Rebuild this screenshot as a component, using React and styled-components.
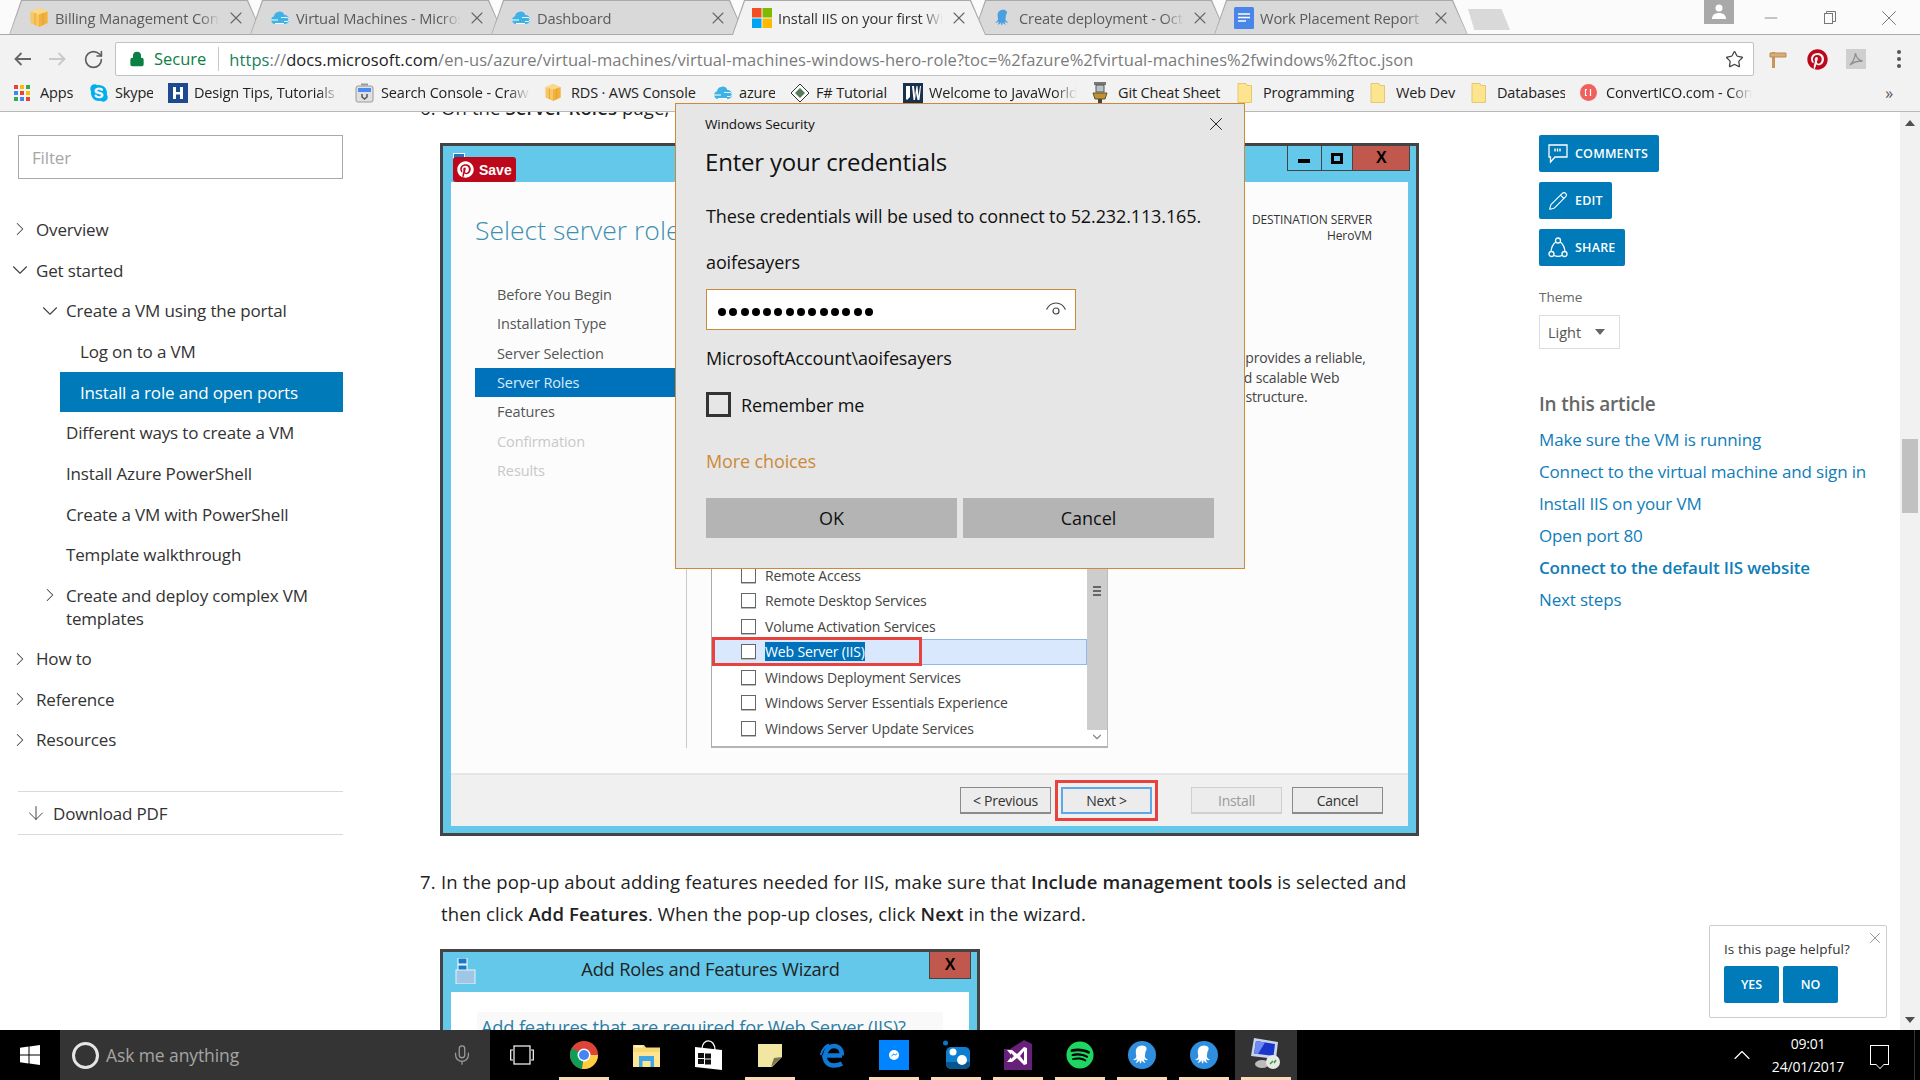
import React from "react";
import styled, { createGlobalStyle } from "styled-components";
import {
  ArrowDown, ChevronDown, ChevronRight, ChevronUp,
  Lock, Mic, Minus, Pencil, RotateCw, Star, X,
} from "lucide-react";
import { FaPinterest, FaSkype, FaSpotify } from "react-icons/fa";

const GlobalStyle = createGlobalStyle`
  html, body { margin: 0; padding: 0; overflow: hidden; background: #fff; }
  body { font-family: "Open Sans", "Liberation Sans", sans-serif; color: #222; }
  * { box-sizing: border-box; }
`;

const Page = styled.div`
  position: relative;
  width: 1920px;
  height: 1080px;
  display: flex;
  flex-direction: column;
  overflow: hidden;
`;

/* ---------- small drawn icons ---------- */

const AwsIcon = ({ size = 18 }) => (
  <svg width={size} height={size + 1} viewBox="0 0 18 19">
    <path d="M9 0l8.500 3.500v11.500L9 19 .5 15V3.500z" fill="#f7c765" />
    <path d="M.5 3.500L9 0l8.500 3.500L9 6.500z" fill="#fbd88c" />
    <path d="M9 6.500V19l8.500-4V3.500z" fill="#f2b13c" />
    <path d="M5 5v12M13 5v12" stroke="#e09f30" strokeWidth=".8" />
  </svg>
);
const CloudIcon = ({ size = 20 }) => (
  <svg width={size} height={size} viewBox="0 0 20 20">
    <path d="M5 16a4 4 0 0 1-1-7.800A5.500 5.500 0 0 1 14.500 7 4.500 4.500 0 0 1 15 16z" fill="#3fb2e5" />
    <path d="M1 12h7M5 15.500h9" stroke="#fff" strokeWidth="1.200" />
    <path d="M11 9.500h6a2 2 0 0 1 0 4h-3" stroke="#e4f5fc" strokeWidth="1" fill="none" />
  </svg>
);
const MsIcon = () => (
  <svg width="20" height="20" viewBox="0 0 20 20">
    <rect width="9.500" height="9.500" fill="#f25022" />
    <rect x="10.500" width="9.500" height="9.500" fill="#7fba00" />
    <rect y="10.500" width="9.500" height="9.500" fill="#00a4ef" />
    <rect x="10.500" y="10.500" width="9.500" height="9.500" fill="#ffb900" />
  </svg>
);
const octopusPath = "M12 2c-4 0-6.500 3-6.500 6.500 0 2.600.8 4 .4 5.500-.4 1.600-2 2.500-3.400 3 1.500.7 3.400.3 4.500-.9-.1 1.700-.8 3-1.800 4 1.900.1 3.400-1.200 4.100-3 .1 1.400.3 2.600 1.200 3.900.9-1.300 1.100-2.500 1.200-3.900.7 1.800 2.200 3.100 4.100 3-1-1-1.700-2.300-1.800-4 1.100 1.200 3 1.600 4.500.9-1.400-.5-3-1.400-3.400-3-.4-1.500.4-2.900.4-5.500C18.500 5 16 2 12 2z";
const OctopusIcon = ({ size = 22, color = "#4a9fe0" }) => (
  <svg width={size} height={size} viewBox="0 0 24 24"><path d={octopusPath} fill={color} /></svg>
);
const DocsIcon = () => (
  <svg width="20" height="22" viewBox="0 0 20 22">
    <rect width="20" height="22" rx="1.500" fill="#4a86e8" />
    <path d="M4 7h12M4 10.500h12M4 14h8" stroke="#fff" strokeWidth="1.600" />
  </svg>
);
const AppsIcon = () => {
  const colors = ["#e94335", "#fbbc05", "#34a853", "#4285f4", "#ea4335", "#fbbc05", "#34a853", "#4285f4", "#ea4335"];
  return (
    <svg width="16" height="16" viewBox="0 0 16 16">
      {colors.map((c, i) => (
        <rect key={i} x={(i % 3) * 6} y={Math.floor(i / 3) * 6} width="4" height="4" fill={c} />
      ))}
    </svg>
  );
};
const LetterH = () => (
  <svg width="20" height="20" viewBox="0 0 20 20">
    <rect width="20" height="20" fill="#1d4a91" />
    <path d="M5 4h3v5h4V4h3v12h-3v-4.500H8V16H5z" fill="#fff" />
  </svg>
);
const ConsoleIcon = () => (
  <svg width="19" height="20" viewBox="0 0 19 20">
    <rect x="1" y="3" width="17" height="16" rx="2" fill="#e0e0e0" stroke="#9a9a9a" />
    <rect x="3" y="5" width="13" height="4" fill="#4c8bf5" />
    <path d="M6 1.500h7" stroke="#9a9a9a" strokeWidth="2" />
    <path d="M7 11v3l2.500 2 2.500-2v-3" fill="none" stroke="#555" strokeWidth="1.500" />
  </svg>
);
const DiamondIcon = () => (
  <svg width="20" height="20" viewBox="0 0 20 20">
    <path d="M10 1l9 9-9 9-9-9z" fill="#fff" stroke="#333" />
    <path d="M10 5l5 5-5 5-5-5z" fill="#567a5a" />
  </svg>
);
const JavaWorldIcon = () => (
  <svg width="20" height="20" viewBox="0 0 20 20">
    <rect width="20" height="20" fill="#17314f" />
    <path d="M3 3h4v11l-3 3-1-1zM9 3h2l1 10 1.500-10h1l1 10L17 3h1l-1.500 14h-2L13 10l-1 7h-1.500z" fill="#fff" />
  </svg>
);
const GitIcon = () => (
  <svg width="16" height="22" viewBox="0 0 16 22">
    <rect x="2" y="0" width="12" height="3" fill="#777" />
    <rect x="4" y="3" width="8" height="7" fill="#b9c2c6" stroke="#555" />
    <path d="M1 11h14l-2 6H3z" fill="#c6902c" stroke="#553" />
    <rect x="6" y="17" width="4" height="5" fill="#444" />
  </svg>
);
const FolderMark = () => (
  <svg width="15" height="20" viewBox="0 0 15 20">
    <path d="M1 .5h8l1 2h4.500v17H1z" fill="#fde48e" stroke="#e4c86f" />
  </svg>
);
const ConvertIcon = () => (
  <svg width="17" height="17" viewBox="0 0 17 17">
    <circle cx="8.500" cy="8.500" r="8.500" fill="#f0605d" />
    <path d="M7 5.500H5.500v6H7M10.500 5v7" fill="none" stroke="#fff" strokeWidth="1.200" />
  </svg>
);
const PostIcon = () => (
  <svg width="18" height="18" viewBox="0 0 18 18">
    <path d="M3 2h3v16H3z" fill="#c9955a" />
    <path d="M1 3h16v4H1z" fill="#d8ae78" stroke="#b98a50" />
  </svg>
);
const PdfIcon = () => (
  <svg width="20" height="20" viewBox="0 0 20 20">
    <rect width="20" height="20" fill="#cfcfcf" />
    <path d="M4 16c3-3 5-8 5.500-12 .5 4 3 7 7 8-4 0-9 .5-12.500 4z" fill="none" stroke="#8f8f8f" strokeWidth="1.300" />
  </svg>
);
const RestoreIcon = () => (
  <svg width="12" height="13" viewBox="0 0 12 13" fill="none" stroke="#777" strokeWidth="1">
    <rect x="0.500" y="2.500" width="8" height="10" />
    <path d="M2.500 2.500V.5h9v10h-3" />
  </svg>
);
const BackIcon = ({ color }) => (
  <svg width="18" height="14" viewBox="0 0 18 14" fill="none" stroke={color} strokeWidth="1.800">
    <path d="M7.500 1L1.500 7l6 6M1.500 7H17" />
  </svg>
);
const ForwardIcon = ({ color }) => (
  <svg width="18" height="14" viewBox="0 0 18 14" fill="none" stroke={color} strokeWidth="1.800">
    <path d="M10.500 1l6 6-6 6M16.500 7H1" />
  </svg>
);
const EyeIcon = () => (
  <svg width="22" height="16" viewBox="0 0 22 16" fill="none" stroke="#444" strokeWidth="1.200">
    <path d="M1.500 7.500C4 2.500 8 1 11 1s7 1.500 9.500 6.500" />
    <circle cx="11" cy="9" r="3" />
  </svg>
);
const CommentIcon = () => (
  <svg width="20" height="20" viewBox="0 0 20 20" fill="none" stroke="#fff" strokeWidth="1.300">
    <path d="M1 1h18v12H7l-4.500 5v-5H1z" />
    <path d="M7 4.500v3M9.500 4.500v3M12 4.500v3" strokeWidth="1.400" />
  </svg>
);
const ShareIcon = () => (
  <svg width="20" height="22" viewBox="0 0 20 22" fill="none" stroke="#fff" strokeWidth="1.300">
    <circle cx="10" cy="3.500" r="2.500" />
    <circle cx="3.500" cy="17" r="2.500" />
    <circle cx="16.500" cy="17" r="2.500" />
    <path d="M7.800 5C5 7 3.500 10 3 14.500M12.200 5C15 7 16.500 10 17 14.500M6 18.500c2.500 1 5.500 1 8 0" />
  </svg>
);
const WinLogo = () => (
  <svg width="20" height="20" viewBox="0 0 20 20" fill="#fff">
    <path d="M0 2.800L8.500 1.600V9.500H0zM9.500 1.500L20 0v9.500H9.500zM0 10.500h8.500v7.900L0 17.200zM9.500 10.500H20V20L9.500 18.500z" />
  </svg>
);
const TaskViewIcon = () => (
  <svg width="24" height="20" viewBox="0 0 24 20" fill="none" stroke="#fff" strokeWidth="1.200">
    <rect x="4" y="1" width="16" height="18" />
    <path d="M3 5H.7v10H3M21 5h2.300v10H21" />
  </svg>
);
const ChromeIcon = () => (
  <svg width="28" height="28" viewBox="0 0 28 28">
    <circle cx="14" cy="14" r="14" fill="#db4437" />
    <path d="M14 14L2 7a14 14 0 0 0 10 20.900z" fill="#0f9d58" />
    <path d="M14 14h14a14 14 0 0 1-16 13.900z" fill="#ffcd40" />
    <circle cx="14" cy="14" r="6.500" fill="#fff" />
    <circle cx="14" cy="14" r="5" fill="#4285f4" />
  </svg>
);
const FolderIcon = () => (
  <svg width="27" height="23" viewBox="0 0 27 23">
    <path d="M0 1h11l2 2.500h14V23H0z" fill="#f8d775" />
    <path d="M0 8h27v15H0z" fill="#fde592" />
    <path d="M1.500 1.500h8v2h-8z" fill="#fff7d5" />
    <path d="M6 12h15v11h-3.500v-6h-8v6H6z" fill="#3fa7e6" />
  </svg>
);
const StoreIcon = () => (
  <svg width="27" height="30" viewBox="0 0 27 30">
    <path d="M7 9c0-11 13-11 13 1" fill="none" stroke="#fff" strokeWidth="1.300" />
    <path d="M0 7l27 3v20L0 27z" fill="#fff" />
    <path d="M3 13h6v5H3zM10 13.500h6v5h-6zM3 19h6v5H3zM10 19.500h6v5h-6z" fill="#111" />
  </svg>
);
const StickyIcon = () => (
  <svg width="24" height="23" viewBox="0 0 24 23">
    <path d="M0 0h24v13L14 23H0z" fill="#f1e7a2" />
    <path d="M13 23l3-9 8-1z" fill="#7d7550" />
  </svg>
);
const EdgeIcon = () => (
  <svg width="24" height="25" viewBox="0 0 24 25" fill="none" stroke="#0f78d4" strokeWidth="4.500">
    <path d="M22 12.500H5C6 7 9 3 14 3s8 4 8 9.500" />
    <path d="M4.500 12c0 7 4 10.500 9.500 10.500 3 0 6-.8 8-2" />
    <path d="M.8 12C2 7 5 3 9 1.500" strokeWidth="2" />
  </svg>
);
const MessengerTile = () => (
  <svg width="30" height="30" viewBox="0 0 30 30">
    <rect width="30" height="30" fill="#0084ff" />
    <circle cx="15" cy="15" r="5" fill="#fff" />
    <path d="M12.500 16l2.500-2.200 1.300 1.300 2-1.600" stroke="#0084ff" fill="none" />
  </svg>
);
const PhotoTile = () => (
  <svg width="28" height="30" viewBox="0 0 28 30">
    <circle cx="3.500" cy="3" r="2.500" fill="#0a78c6" />
    <rect x="4" y="7" width="24" height="22" rx="5" fill="#0c7fd0" />
    <path d="M4 22h24v2a5 5 0 0 1-5 5H9a5 5 0 0 1-5-5z" fill="#07568f" />
    <circle cx="11" cy="12" r="3.500" fill="#fff" />
    <circle cx="20" cy="20" r="5" fill="#fff" />
  </svg>
);
const VsIcon = () => (
  <svg width="28" height="30" viewBox="0 0 28 30">
    <path d="M0 9h6l14-9 8 4v26H0z" fill="#68217a" />
    <path d="M3 10l5 0 5 4 7-7 3 1v16l-3 1-7-7-5 4-5 0 5-6z" fill="#fff" />
    <path d="M7 13l3 3-3 3zM20 11v10l-4-5z" fill="#68217a" />
  </svg>
);
const OctoBadge = () => (
  <svg width="28" height="28" viewBox="0 0 28 28">
    <circle cx="14" cy="14" r="14" fill="#2f8fde" />
    <g transform="translate(2.500 2.500) scale(.96)"><path d={octopusPath} fill="#fff" /></g>
  </svg>
);
const RdpIcon = () => (
  <svg width="32" height="34" viewBox="0 0 32 34">
    <path d="M4 0l24 4-2 17L1 18z" fill="#c9d3ea" />
    <path d="M6 3l19 3-1.500 12L4 15.500z" fill="#1a35c9" />
    <path d="M6 3l9 1.500L8 16l-4-.5z" fill="#6f8cf0" />
    <ellipse cx="12" cy="26" rx="7" ry="4" fill="#bbb" />
    <circle cx="23" cy="24" r="7" fill="#e8e8e8" />
    <path d="M20 26l3-3M24 25l2-3" stroke="#2fa32f" strokeWidth="1.500" />
  </svg>
);
const FileIcon = () => (
  <svg width="21" height="26" viewBox="0 0 21 26">
    <rect x="3" y="0" width="9" height="6" fill="#1a78c9" stroke="#fff" />
    <rect x="3" y="7" width="9" height="6" fill="#1a78c9" stroke="#fff" />
    <rect x="1" y="12" width="19" height="14" fill="#9fc6e4" stroke="#e6f2fa" />
  </svg>
);

/* ---------- browser chrome ---------- */

const TabStrip = styled.div`
  height: 35px;
  display: flex;
  padding-left: 9px;
  background: #fbfbfb;
  box-shadow: inset 0 -1px #a9a9a9;
`;

const Tab = styled.div`
  position: relative;
  width: 254px;
  height: 35px;
  margin-right: -13px;
  padding: 0 17px 0 20px;
  display: flex;
  align-items: center;
  gap: 6px;
  background: #a9a9a9;
  z-index: ${(p) => (p.$active ? 2 : 1)};
  color: ${(p) => (p.$active ? "#333" : "#5a5a5a")};
  clip-path: polygon(12px 0, calc(100% - 15px) 0, 100% 100%, 0 100%);
  &::before {
    content: "";
    position: absolute;
    inset: 1px 1px ${(p) => (p.$active ? "0" : "1px")} 1px;
    background: ${(p) => (p.$active ? "#f2f2f2" : "#d9d9d9")};
    clip-path: polygon(12px 0, calc(100% - 15px) 0, 100% 100%, 0 100%);
  }
  & > * { position: relative; flex-shrink: 0; }
`;

const TabIcon = styled.span`
  width: 20px;
  height: 22px;
  display: flex;
  align-items: center;
  justify-content: center;
`;

const TabTitle = styled.span`
  flex: 1 1 0 !important;
  min-width: 0;
  font-size: 14.700px;
  letter-spacing: -0.15px;
  white-space: nowrap;
  overflow: hidden;
  mask-image: linear-gradient(to right, #000 88%, transparent);
`;

const NewTab = styled.div`
  width: 42px;
  height: 21px;
  margin: 9px 0 0 13px;
  background: #d9d9d9;
  clip-path: polygon(0 0, 80% 0, 100% 100%, 15% 100%);
`;

const WindowButtons = styled.div`
  margin-left: auto;
  padding-right: 2px;
  display: flex;
  align-items: flex-start;
`;

const Profile = styled.div`
  width: 30px;
  height: 24px;
  margin-right: 7px;
  background: #a9a9a9;
  display: flex;
  align-items: center;
  justify-content: center;
`;

const WindowButton = styled.div`
  width: 59px;
  height: 35px;
  display: flex;
  align-items: center;
  justify-content: center;
  color: #777;
`;

const Toolbar = styled.div`
  height: 41px;
  padding: 7px 0 0 14px;
  display: flex;
  align-items: flex-start;
  background: #f2f2f2;
`;

const NavButton = styled.span`
  width: 18px;
  height: 34px;
  margin-right: ${(p) => p.$gap}px;
  flex-shrink: 0;
  display: flex;
  align-items: center;
  justify-content: center;
  color: #5f5f5f;
  svg { flex-shrink: 0; }
`;

const Address = styled.div`
  width: 1639px;
  height: 34px;
  flex-shrink: 0;
  padding: 0 9px 0 13px;
  display: flex;
  align-items: center;
  background: #fff;
  border: 1px solid #c2c2c2;
  border-radius: 2px;
  font-size: 16.500px;
  white-space: nowrap;
`;

const Secure = styled.span`
  margin-left: 9px;
  padding-right: 12px;
  color: #0b8043;
  border-right: 1px solid #c9c9c9;
  line-height: 24px;
`;

const Url = styled.span`
  flex: 1;
  margin-left: 10px;
  color: #7b7b7b;
  letter-spacing: 0.06px;
  b { font-weight: 400; color: #222; }
  i { font-style: normal; color: #1a7f5a; }
`;

const ExtButton = styled.span`
  width: ${(p) => p.$w}px;
  height: 34px;
  flex-shrink: 0;
  display: flex;
  align-items: center;
  justify-content: center;
  color: #555;
`;

const Bookmarks = styled.div`
  height: 36px;
  padding: 0 27px 2px 14px;
  display: flex;
  align-items: center;
  gap: 15px;
  background: #f2f2f2;
  border-bottom: 1px solid #b8b8b8;
  font-size: 14.500px;
  letter-spacing: -0.15px;
  color: #222;
`;

const Bookmark = styled.div`
  display: flex;
  align-items: center;
`;

const BookmarkIcon = styled.span`
  width: 26px;
  display: flex;
  align-items: center;
`;

const BookmarkLabel = styled.span`
  width: ${(p) => p.$w}px;
  white-space: nowrap;
  overflow: hidden;
  ${(p) => p.$fade && "mask-image: linear-gradient(to right, #000 85%, transparent);"}
`;

const MoreBookmarks = styled.span`
  margin-left: auto;
  font-size: 16px;
  color: #555;
`;

/* ---------- page columns ---------- */

const Main = styled.main`
  flex: 1;
  min-height: 0;
  display: flex;
  overflow: hidden;
  background: #fff;
`;

const Sidebar = styled.nav`
  width: 420px;
  flex-shrink: 0;
  padding-top: 23px;
  font-size: 17px;
  letter-spacing: -0.16px;
  color: #333;
`;

const Filter = styled.div`
  width: 325px;
  height: 44px;
  margin: 0 0 30px 18px;
  padding-left: 13px;
  display: flex;
  align-items: center;
  border: 1px solid #aaa;
  color: #a6a6a6;
`;

const TocRow = styled.div`
  width: ${(p) => 343 - (p.$left || 0)}px;
  margin-left: ${(p) => p.$left || 0}px;
  padding: ${(p) => (p.$multi ? "8.500px" : "8.850px")} 0 ${(p) => (p.$multi ? "8.500px" : "8.850px")} ${(p) => p.$pad}px;
  display: flex;
  line-height: 23px;
  background: ${(p) => (p.$active ? "#007ab8" : "transparent")};
  color: ${(p) => (p.$active ? "#fff" : "inherit")};
`;

const Caret = styled.span`
  width: 24px;
  height: 23px;
  margin-right: 4px;
  flex-shrink: 0;
  display: flex;
  align-items: center;
  justify-content: center;
  color: #444;
  svg { flex-shrink: 0; }
`;

const DownloadRow = styled.div`
  width: 325px;
  height: 44px;
  margin: 31px 0 0 18px;
  padding-left: 7px;
  display: flex;
  align-items: center;
  gap: 6px;
  border-top: 1px solid #d9d9d9;
  border-bottom: 1px solid #d9d9d9;
`;

const Article = styled.article`
  width: 999px;
  flex-shrink: 0;
  margin-top: -20px;
`;

const Step = styled.div`
  display: flex;
  font-size: 18.500px;
  letter-spacing: 0.12px;
  line-height: 32px;
  color: #222;
  margin-top: ${(p) => p.$top || 0}px;
  b { font-weight: 600; }
`;

const StepNumber = styled.span`
  width: 21px;
  flex-shrink: 0;
`;

const StepText = styled.span`
  white-space: nowrap;
`;

/* ---------- server manager screenshots ---------- */

const WizardFrame = styled.div`
  position: relative;
  width: ${(p) => p.$w}px;
  height: ${(p) => p.$h}px;
  margin: ${(p) => p.$top}px 0 0 20px;
  padding: 0 8px 7px;
  display: flex;
  flex-direction: column;
  background: #63c8ea;
  border: 3px solid #444;
`;

const FrameBar = styled.div`
  height: 36px;
  flex-shrink: 0;
  display: flex;
  align-items: flex-start;
  margin-right: -2px;
`;

const TinyIcon = styled.span`
  width: 12px;
  height: 8px;
  margin: 7px 0 0 2px;
  background: #1a78c9;
  border: 1px solid #fff;
`;

const FrameButton = styled.span`
  width: ${(p) => p.$w}px;
  height: 26px;
  margin-top: -1px;
  margin-left: ${(p) => p.$left || 0}px;
  display: flex;
  align-items: center;
  justify-content: center;
  background: ${(p) => (p.$close ? "#c0584e" : "transparent")};
  border: 1px solid #444;
  border-left-width: ${(p) => (p.$first ? 1 : 0)}px;
  font-family: "Liberation Sans", sans-serif;
  font-weight: 700;
  font-size: 16px;
  color: #000;
`;

const MinGlyph = styled.span`
  width: 12px;
  height: 4px;
  margin-top: 6px;
  background: #000;
`;

const MaxGlyph = styled.span`
  width: 12px;
  height: 11px;
  border: 3px solid #000;
`;

const PinSave = styled.div`
  position: absolute;
  left: 10px;
  top: 11px;
  width: 63px;
  height: 25px;
  padding-left: 4px;
  display: flex;
  align-items: center;
  gap: 5px;
  background: #bd081c;
  border-radius: 3px;
  color: #fff;
  font-family: "Liberation Sans", sans-serif;
  font-weight: 700;
  font-size: 14px;
`;

const WizardBody = styled.div`
  flex: 1;
  min-height: 0;
  display: flex;
  flex-direction: column;
  background: #fcfcfc;
`;

const WizardContent = styled.div`
  flex: 1;
  min-height: 0;
  padding: 30px 36px 25px 24px;
  display: flex;
  flex-direction: column;
`;

const WizardHeader = styled.div`
  height: 68px;
  flex-shrink: 0;
  display: flex;
  justify-content: space-between;
`;

const WizardTitle = styled.div`
  font-size: 26.500px;
  font-weight: 300;
  line-height: 36px;
  color: #3b8fb0;
`;

const Destination = styled.div`
  text-align: right;
  font-size: 12px;
  line-height: 16px;
  letter-spacing: -0.1px;
  color: #333;
`;

const WizardColumns = styled.div`
  flex: 1;
  min-height: 0;
  display: flex;
`;

const StepNav = styled.div`
  width: 212px;
  flex-shrink: 0;
  border-right: 1px solid #c9c9c9;
`;

const StepNavItem = styled.div`
  height: 29.300px;
  padding-left: 22px;
  display: flex;
  align-items: center;
  font-size: 14.500px;
  letter-spacing: -0.1px;
  background: ${(p) => (p.$active ? "#0071bb" : "transparent")};
  color: ${(p) => (p.$active ? "#d7ecf8" : p.$off ? "#c8c8c8" : "#555")};
`;

const RoleBox = styled.div`
  width: 397px;
  margin-left: 24px;
  flex-shrink: 0;
  display: flex;
  background: #fff;
  border-left: 1px solid #aaa;
  border-bottom: 2px solid #b5b5b5;
  border-right: 1px solid #bbb;
`;

const RoleList = styled.div`
  flex: 1;
  padding-bottom: 5px;
  display: flex;
  flex-direction: column;
  justify-content: flex-end;
`;

const RoleRow = styled.div`
  position: relative;
  height: 25.500px;
  padding-left: 29px;
  display: flex;
  align-items: center;
  gap: 9px;
  font-size: 14px;
  letter-spacing: -0.15px;
  color: #444;
  ${(p) => p.$selected && "background: #d9e8fc; box-shadow: inset 0 0 0 1px #8fb9ec;"}
`;

const RoleCheck = styled.span`
  width: 15px;
  height: 15px;
  flex-shrink: 0;
  background: #fff;
  border: 1px solid #666;
  box-shadow: 0 1px 0 #bbb;
`;

const RoleName = styled.span`
  ${(p) => p.$selected && "background: #0071bb; color: #fff; line-height: 19px;"}
`;

const RedBox = styled.span`
  position: absolute;
  left: ${(p) => p.$l}px;
  top: ${(p) => p.$t}px;
  width: ${(p) => p.$w}px;
  height: ${(p) => p.$h}px;
  border: 3px solid #e8423f;
`;

const RoleScroll = styled.div`
  width: 20px;
  flex-shrink: 0;
  display: flex;
  flex-direction: column;
  justify-content: flex-end;
  align-items: center;
  background: #cdcdcd;
`;

const ScrollGrip = styled.span`
  width: 8px;
  height: 10px;
  margin-bottom: 134px;
  background: repeating-linear-gradient(#666 0 2px, transparent 2px 4px);
`;

const RoleScrollDown = styled.span`
  width: 20px;
  height: 16px;
  display: flex;
  justify-content: center;
  background: #fff;
  color: #888;
`;

const Description = styled.div`
  margin: 68px 0 0 34px;
  font-size: 14px;
  line-height: 19.500px;
  letter-spacing: -0.15px;
  white-space: nowrap;
  color: #444;
`;

const WizardFooter = styled.div`
  height: 53px;
  flex-shrink: 0;
  padding-right: 25px;
  display: flex;
  justify-content: flex-end;
  align-items: center;
  gap: 10px;
  background: #f0f0f0;
  border-top: 2px solid #e6e6e6;
`;

const WizardButton = styled.span`
  position: relative;
  width: 91px;
  height: 27px;
  margin-left: ${(p) => p.$left || 0}px;
  display: flex;
  align-items: center;
  justify-content: center;
  background: #ececec;
  font-size: 14px;
  letter-spacing: -0.3px;
  border: 1px solid ${(p) => (p.$off ? "#cfcfcf" : "#8a8a8a")};
  border-bottom-width: 2px;
  color: ${(p) => (p.$off ? "#9a9a9a" : "#333")};
  ${(p) => p.$focus && "border: 2px solid #5fa8e8;"}
`;

const SmallBar = styled.div`
  height: 40px;
  flex-shrink: 0;
  padding-left: 4px;
  display: flex;
  align-items: flex-start;
`;

const SmallIcon = styled.span`
  margin-top: 6px;
`;

const SmallTitle = styled.div`
  flex: 1;
  padding: 4px 0 0 16px;
  text-align: center;
  font-size: 18.300px;
  letter-spacing: -0.2px;
  line-height: 26px;
  color: #222;
`;

const SmallClose = styled.span`
  width: 42px;
  height: 27px;
  margin-right: -2px;
  display: flex;
  align-items: center;
  justify-content: center;
  background: #c0584e;
  border: 1px solid #444;
  border-top: none;
  font-family: "Liberation Sans", sans-serif;
  font-weight: 700;
  font-size: 16px;
  color: #000;
`;

const SmallBody = styled.div`
  flex: 1;
  padding: 20px 26px 0;
  background: #fff;
`;

const FeatureHeading = styled.div`
  padding-left: 4px;
  font-size: 18.300px;
  line-height: 30px;
  letter-spacing: -0.2px;
  white-space: nowrap;
  background: #f9f9f9;
  color: #2d7fa5;
`;

/* ---------- right rail ---------- */

const Rail = styled.aside`
  flex: 1;
  padding: 23px 0 0 120px;
  display: flex;
  flex-direction: column;
  align-items: flex-start;
`;

const ActionButton = styled.div`
  height: 37px;
  width: ${(p) => p.$w}px;
  margin-bottom: 10px;
  padding-left: 9px;
  display: flex;
  align-items: center;
  gap: 7px;
  background: #007ab8;
  border-radius: 2px;
  color: #fff;
  font-size: 12.500px;
  font-weight: 600;
  letter-spacing: 0.2px;
  text-transform: uppercase;
`;

const ThemeLabel = styled.div`
  margin-top: 12px;
  font-size: 13.500px;
  line-height: 18px;
  color: #666;
`;

const ThemeSelect = styled.div`
  width: 81px;
  height: 34px;
  margin-top: 9px;
  padding-left: 8px;
  display: flex;
  align-items: center;
  gap: 14px;
  border: 1px solid #ddd;
  font-size: 14.500px;
  color: #555;
`;

const SelectArrow = styled.span`
  width: 0;
  height: 0;
  border: 5px solid transparent;
  border-top: 6px solid #666;
  border-bottom: none;
`;

const RailHeading = styled.div`
  margin-top: 41px;
  font-size: 19px;
  font-weight: 600;
  line-height: 28px;
  letter-spacing: -0.2px;
  color: #666;
`;

const RailLinks = styled.div`
  margin-top: 6px;
`;

const RailLink = styled.div`
  font-size: 17px;
  line-height: 32px;
  letter-spacing: -0.16px;
  white-space: nowrap;
  color: #0f7db8;
  font-weight: ${(p) => (p.$active ? 600 : 400)};
`;

const PageScroll = styled.div`
  width: 20px;
  flex-shrink: 0;
  padding: 8px 0 7px;
  display: flex;
  flex-direction: column;
  align-items: center;
  background: #f1f1f1;
`;

const ScrollArrow = styled.span`
  width: 0;
  height: 0;
  border: 5px solid transparent;
  ${(p) => (p.$down
    ? "margin-top: auto; border-top: 6px solid #505050; border-bottom: none;"
    : "border-bottom: 6px solid #505050; border-top: none;")}
`;

const ScrollThumb = styled.span`
  width: 16px;
  height: 74px;
  margin-top: 313px;
  background: #c1c1c1;
`;

const HelpCard = styled.div`
  position: absolute;
  left: 1709px;
  top: 925px;
  width: 178px;
  height: 93px;
  padding: 13px 14px;
  background: #fff;
  border: 1px solid #ccc;
  border-radius: 2px;
`;

const HelpClose = styled.span`
  position: absolute;
  right: 2px;
  top: 3px;
  color: #777;
`;

const HelpText = styled.div`
  font-size: 13.500px;
  line-height: 20px;
  letter-spacing: 0.1px;
  white-space: nowrap;
  color: #333;
`;

const HelpButtons = styled.div`
  margin-top: 7px;
  display: flex;
  gap: 4px;
`;

const HelpButton = styled.span`
  width: 55px;
  height: 37px;
  display: flex;
  align-items: center;
  justify-content: center;
  background: #007ab8;
  border-radius: 2px;
  color: #fff;
  font-size: 12.500px;
  font-weight: 600;
`;

/* ---------- credentials dialog ---------- */

const Dialog = styled.div`
  position: absolute;
  left: 675px;
  top: 103px;
  width: 570px;
  height: 466px;
  padding: 10px 29px 0;
  background: #e6e6e6;
  border: 1px solid #cb8a3a;
  color: #111;
`;

const DialogTop = styled.div`
  height: 20px;
  margin-right: -12px;
  display: flex;
  justify-content: space-between;
  align-items: center;
  font-size: 13.500px;
  letter-spacing: -0.1px;
`;

const DialogTitle = styled.div`
  margin-top: 10px;
  font-size: 24px;
  line-height: 36px;
  letter-spacing: -0.2px;
`;

const DialogLine = styled.div`
  margin-top: ${(p) => p.$top}px;
  margin-left: 1px;
  font-size: 18px;
  line-height: 26px;
  letter-spacing: -0.12px;
  white-space: nowrap;
  color: ${(p) => p.$color || "inherit"};
`;

const Password = styled.div`
  width: 370px;
  height: 41px;
  margin: 14px 0 0 1px;
  padding: 0 8px 0 11px;
  display: flex;
  align-items: center;
  justify-content: space-between;
  background: #fff;
  border: 1px solid #cb8a3a;
`;

const Dots = styled.span`
  display: flex;
  gap: 3.300px;
  margin-top: 5px;
`;

const Dot = styled.span`
  width: 8px;
  height: 8px;
  border-radius: 50%;
  background: #000;
`;

const Remember = styled.div`
  margin: 21px 0 0 1px;
  height: 25px;
  display: flex;
  align-items: center;
  gap: 10px;
  font-size: 18px;
  letter-spacing: -0.12px;
`;

const Checkbox = styled.span`
  width: 25px;
  height: 25px;
  border: 3px solid #333;
`;

const DialogButtons = styled.div`
  margin: 24px 0 0 1px;
  display: flex;
  gap: 6px;
`;

const DialogButton = styled.div`
  width: 251px;
  height: 40px;
  display: flex;
  align-items: center;
  justify-content: center;
  background: #b4b4b4;
  font-size: 18px;
`;

/* ---------- taskbar ---------- */

const Taskbar = styled.footer`
  height: 50px;
  flex-shrink: 0;
  display: flex;
  align-items: stretch;
  background: #000;
  color: #fff;
`;

const StartSlot = styled.div`
  width: 60px;
  display: flex;
  align-items: center;
  justify-content: center;
`;

const SearchBox = styled.div`
  width: 430px;
  padding: 0 17px 0 12px;
  display: flex;
  align-items: center;
  background: #343434;
  color: #a5a5a5;
  font-size: 17.500px;
  letter-spacing: -0.1px;
`;

const CortanaRing = styled.span`
  width: 27px;
  height: 27px;
  margin-right: 7px;
  border: 3px solid #e4e4e4;
  border-radius: 50%;
`;

const SearchMic = styled.span`
  margin-left: auto;
  display: flex;
  color: #9a9a9a;
`;

const TaskSlot = styled.div`
  position: relative;
  width: ${(p) => p.$w || 62}px;
  display: flex;
  align-items: center;
  justify-content: center;
  background: ${(p) => (p.$current ? "#333" : "transparent")};
  ${(p) => p.$open && `
    &::after {
      content: "";
      position: absolute;
      left: 6px;
      right: 6px;
      bottom: 0;
      height: 3px;
      background: #fcd9b6;
    }
  `}
`;

const Tray = styled.div`
  margin-left: auto;
  margin-right: 5px;
  padding-right: 25px;
  display: flex;
  align-items: center;
  border-right: 1px solid #333;
`;

const TrayChevron = styled.span`
  display: flex;
  margin-right: 13px;
`;

const Clock = styled.div`
  width: 78px;
  text-align: center;
  font-size: 14px;
  line-height: 23px;
  letter-spacing: -0.2px;
`;

const NotifyIcon = styled.span`
  position: relative;
  width: 19px;
  height: 20px;
  margin-left: 23px;
  border: 1px solid #fff;
  &::after {
    content: "";
    position: absolute;
    left: 5px;
    bottom: -5px;
    width: 7px;
    height: 7px;
    background: #000;
    border-right: 1px solid #fff;
    border-bottom: 1px solid #fff;
    transform: rotate(45deg) scale(.7);
  }
`;

/* ---------- data ---------- */

const tabs = [
  { icon: <AwsIcon />, title: "Billing Management Console" },
  { icon: <CloudIcon />, title: "Virtual Machines - Microsoft Azure" },
  { icon: <CloudIcon />, title: "Dashboard" },
  { icon: <MsIcon />, title: "Install IIS on your first Windows VM", active: true },
  { icon: <OctopusIcon />, title: "Create deployment - Octopus Deploy" },
  { icon: <DocsIcon />, title: "Work Placement Report - Google Docs" },
];

const bookmarks = [
  { icon: <AppsIcon />, label: "Apps", w: 34 },
  { icon: <FaSkype size={20} color="#00aff0" />, label: "Skype", w: 38 },
  { icon: <LetterH />, label: "Design Tips, Tutorials and more", w: 146, fade: true },
  { icon: <ConsoleIcon />, label: "Search Console - Crawl Errors", w: 149, fade: true },
  { icon: <AwsIcon size={16} />, label: "RDS · AWS Console", w: 127 },
  { icon: <CloudIcon />, label: "azure", w: 36 },
  { icon: <DiamondIcon />, label: "F# Tutorial", w: 72 },
  { icon: <JavaWorldIcon />, label: "Welcome to JavaWorld", w: 148, fade: true },
  { icon: <GitIcon />, label: "Git Cheat Sheet", w: 104 },
  { icon: <FolderMark />, label: "Programming", w: 92 },
  { icon: <FolderMark />, label: "Web Dev", w: 60 },
  { icon: <FolderMark />, label: "Databases", w: 68 },
  { icon: <ConvertIcon />, label: "ConvertICO.com - Convert", w: 146, fade: true },
];

const toc = [
  { label: "Overview", pad: 8, caret: "right" },
  { label: "Get started", pad: 8, caret: "down" },
  { label: "Create a VM using the portal", pad: 38, caret: "down" },
  { label: "Log on to a VM", left: 60, pad: 20 },
  { label: "Install a role and open ports", left: 60, pad: 20, active: true },
  { label: "Different ways to create a VM", pad: 66 },
  { label: "Install Azure PowerShell", pad: 66 },
  { label: "Create a VM with PowerShell", pad: 66 },
  { label: "Template walkthrough", pad: 66 },
  { label: "Create and deploy complex VM templates", pad: 38, caret: "right", multi: true },
  { label: "How to", pad: 8, caret: "right" },
  { label: "Reference", pad: 8, caret: "right" },
  { label: "Resources", pad: 8, caret: "right" },
];

const wizardSteps = [
  { label: "Before You Begin" },
  { label: "Installation Type" },
  { label: "Server Selection" },
  { label: "Server Roles", active: true },
  { label: "Features" },
  { label: "Confirmation", off: true },
  { label: "Results", off: true },
];

const roles = [
  "Remote Access",
  "Remote Desktop Services",
  "Volume Activation Services",
  "Web Server (IIS)",
  "Windows Deployment Services",
  "Windows Server Essentials Experience",
  "Windows Server Update Services",
];

const articleLinks = [
  { label: "Make sure the VM is running" },
  { label: "Connect to the virtual machine and sign in" },
  { label: "Install IIS on your VM" },
  { label: "Open port 80" },
  { label: "Connect to the default IIS website", active: true },
  { label: "Next steps" },
];

const taskApps = [
  { icon: <ChromeIcon />, open: true },
  { icon: <FolderIcon /> },
  { icon: <StoreIcon /> },
  { icon: <StickyIcon />, open: true },
  { icon: <EdgeIcon /> },
  { icon: <MessengerTile />, open: true },
  { icon: <PhotoTile />, open: true },
  { icon: <VsIcon />, open: true },
  { icon: <FaSpotify size={28} color="#1ed760" />, open: true },
  { icon: <OctoBadge />, open: true },
  { icon: <OctoBadge />, open: true },
  { icon: <RdpIcon />, open: true, current: true },
];

const App = () => (
  <Page>
    <GlobalStyle />

    <TabStrip>
      {tabs.map((t) => (
        <Tab key={t.title} $active={t.active}>
          <TabIcon>{t.icon}</TabIcon>
          <TabTitle>{t.title}</TabTitle>
          <X size={20} strokeWidth={1.3} color="#666" />
        </Tab>
      ))}
      <NewTab />
      <WindowButtons>
        <Profile>
          <svg width="14" height="16" viewBox="0 0 14 16" fill="#fff">
            <circle cx="7" cy="4" r="3.500" />
            <path d="M0 15c0-4 3-6 7-6s7 2 7 6z" />
          </svg>
        </Profile>
        <WindowButton><Minus size={20} strokeWidth={1} /></WindowButton>
        <WindowButton><RestoreIcon /></WindowButton>
        <WindowButton><X size={26} strokeWidth={0.9} /></WindowButton>
      </WindowButtons>
    </TabStrip>

    <Toolbar>
      <NavButton $gap={16}><BackIcon color="#666" /></NavButton>
      <NavButton $gap={18}><ForwardIcon color="#c8c8c8" /></NavButton>
      <NavButton $gap={13}><RotateCw size={21} strokeWidth={1.9} /></NavButton>
      <Address>
        <Lock size={16} color="#0b8043" fill="#0b8043" />
        <Secure>Secure</Secure>
        <Url>
          <i>https</i>://<b>docs.microsoft.com</b>/en-us/azure/virtual-machines/virtual-machines-windows-hero-role?toc=%2fazure%2fvirtual-machines%2fwindows%2ftoc.json
        </Url>
        <Star size={19} color="#444" strokeWidth={1.6} />
      </Address>
      <ExtButton $w={48}><PostIcon /></ExtButton>
      <ExtButton $w={30}><FaPinterest size={21} color="#bd081c" /></ExtButton>
      <ExtButton $w={48}><PdfIcon /></ExtButton>
      <ExtButton $w={38}>
        <svg width="4" height="18" viewBox="0 0 4 18" fill="#555">
          <circle cx="2" cy="2" r="2" /><circle cx="2" cy="9" r="2" /><circle cx="2" cy="16" r="2" />
        </svg>
      </ExtButton>
    </Toolbar>

    <Bookmarks>
      {bookmarks.map((b) => (
        <Bookmark key={b.label}>
          <BookmarkIcon>{b.icon}</BookmarkIcon>
          <BookmarkLabel $w={b.w} $fade={b.fade}>{b.label}</BookmarkLabel>
        </Bookmark>
      ))}
      <MoreBookmarks>»</MoreBookmarks>
    </Bookmarks>

    <Main>
      <Sidebar>
        <Filter>Filter</Filter>
        {toc.map((item) => (
          <TocRow key={item.label} $left={item.left} $pad={item.pad} $active={item.active} $multi={item.multi}>
            {item.caret && (
              <Caret>
                {item.caret === "down"
                  ? <ChevronDown size={26} strokeWidth={1} />
                  : <ChevronRight size={22} strokeWidth={1.1} />}
              </Caret>
            )}
            <span>{item.label}</span>
          </TocRow>
        ))}
        <DownloadRow>
          <ArrowDown size={22} strokeWidth={1} />
          Download PDF
        </DownloadRow>
      </Sidebar>

      <Article>
        <Step>
          <StepNumber>6.</StepNumber>
          <StepText>On the <b>Server Roles</b> page, select <b>Web Server (IIS)</b>.</StepText>
        </Step>

        <WizardFrame $w={979} $h={693} $top={19}>
          <FrameBar>
            <TinyIcon />
            <FrameButton $w={35} $left={822} $first><MinGlyph /></FrameButton>
            <FrameButton $w={32}><MaxGlyph /></FrameButton>
            <FrameButton $w={57} $close>X</FrameButton>
          </FrameBar>
          <PinSave><FaPinterest size={17} />Save</PinSave>
          <WizardBody>
            <WizardContent>
              <WizardHeader>
                <WizardTitle>Select server roles</WizardTitle>
                <Destination>DESTINATION SERVER<br />HeroVM</Destination>
              </WizardHeader>
              <WizardColumns>
                <StepNav>
                  {wizardSteps.map((s) => (
                    <StepNavItem key={s.label} $active={s.active} $off={s.off}>{s.label}</StepNavItem>
                  ))}
                </StepNav>
                <RoleBox>
                  <RoleList>
                    {roles.map((r) => {
                      const selected = r === "Web Server (IIS)";
                      return (
                        <RoleRow key={r} $selected={selected}>
                          <RoleCheck />
                          <RoleName $selected={selected}>{r}</RoleName>
                          {selected && <RedBox $l={0} $t={-2} $w={210} $h={29} />}
                        </RoleRow>
                      );
                    })}
                  </RoleList>
                  <RoleScroll>
                    <ScrollGrip />
                    <RoleScrollDown><ChevronDown size={14} /></RoleScrollDown>
                  </RoleScroll>
                </RoleBox>
                <Description>
                  Web Server (IIS) provides a reliable,<br />
                  manageable, and scalable Web<br />
                  application infrastructure.
                </Description>
              </WizardColumns>
            </WizardContent>
            <WizardFooter>
              <WizardButton>&lt; Previous</WizardButton>
              <WizardButton $focus>
                Next &gt;
                <RedBox $l={-8} $t={-9} $w={103} $h={41} />
              </WizardButton>
              <WizardButton $off $left={29}>Install</WizardButton>
              <WizardButton>Cancel</WizardButton>
            </WizardFooter>
          </WizardBody>
        </WizardFrame>

        <Step $top={30}>
          <StepNumber>7.</StepNumber>
          <StepText>
            In the pop-up about adding features needed for IIS, make sure that <b>Include management tools</b> is selected and<br />
            then click <b>Add Features</b>. When the pop-up closes, click <b>Next</b> in the wizard.
          </StepText>
        </Step>

        <WizardFrame $w={540} $h={200} $top={19}>
          <SmallBar>
            <SmallIcon><FileIcon /></SmallIcon>
            <SmallTitle>Add Roles and Features Wizard</SmallTitle>
            <SmallClose>X</SmallClose>
          </SmallBar>
          <SmallBody>
            <FeatureHeading>Add features that are required for Web Server (IIS)?</FeatureHeading>
          </SmallBody>
        </WizardFrame>
      </Article>

      <Rail>
        <ActionButton $w={120}><CommentIcon />Comments</ActionButton>
        <ActionButton $w={73}><Pencil size={20} strokeWidth={1.3} />Edit</ActionButton>
        <ActionButton $w={86}><ShareIcon />Share</ActionButton>
        <ThemeLabel>Theme</ThemeLabel>
        <ThemeSelect>Light<SelectArrow /></ThemeSelect>
        <RailHeading>In this article</RailHeading>
        <RailLinks>
          {articleLinks.map((l) => (
            <RailLink key={l.label} $active={l.active}>{l.label}</RailLink>
          ))}
        </RailLinks>
      </Rail>

      <PageScroll>
        <ScrollArrow />
        <ScrollThumb />
        <ScrollArrow $down />
      </PageScroll>
    </Main>

    <Taskbar>
      <StartSlot><WinLogo /></StartSlot>
      <SearchBox>
        <CortanaRing />
        Ask me anything
        <SearchMic><Mic size={22} strokeWidth={1.4} /></SearchMic>
      </SearchBox>
      <TaskSlot $w={63}><TaskViewIcon /></TaskSlot>
      {taskApps.map((a, i) => (
        <TaskSlot key={i} $open={a.open} $current={a.current}>{a.icon}</TaskSlot>
      ))}
      <Tray>
        <TrayChevron><ChevronUp size={28} strokeWidth={1} /></TrayChevron>
        <Clock>09:01<br />24/01/2017</Clock>
        <NotifyIcon />
      </Tray>
    </Taskbar>

    <Dialog>
      <DialogTop>
        Windows Security
        <X size={22} strokeWidth={1} />
      </DialogTop>
      <DialogTitle>Enter your credentials</DialogTitle>
      <DialogLine $top={23}>These credentials will be used to connect to 52.232.113.165.</DialogLine>
      <DialogLine $top={20}>aoifesayers</DialogLine>
      <Password>
        <Dots>
          {Array.from({ length: 14 }, (_, i) => <Dot key={i} />)}
        </Dots>
        <EyeIcon />
      </Password>
      <DialogLine $top={15}>MicrosoftAccount\aoifesayers</DialogLine>
      <Remember><Checkbox />Remember me</Remember>
      <DialogLine $top={31} $color="#cb8a3a">More choices</DialogLine>
      <DialogButtons>
        <DialogButton>OK</DialogButton>
        <DialogButton>Cancel</DialogButton>
      </DialogButtons>
    </Dialog>

    <HelpCard>
      <HelpClose><X size={18} strokeWidth={1} /></HelpClose>
      <HelpText>Is this page helpful?</HelpText>
      <HelpButtons>
        <HelpButton>YES</HelpButton>
        <HelpButton>NO</HelpButton>
      </HelpButtons>
    </HelpCard>
  </Page>
);

export default App;
